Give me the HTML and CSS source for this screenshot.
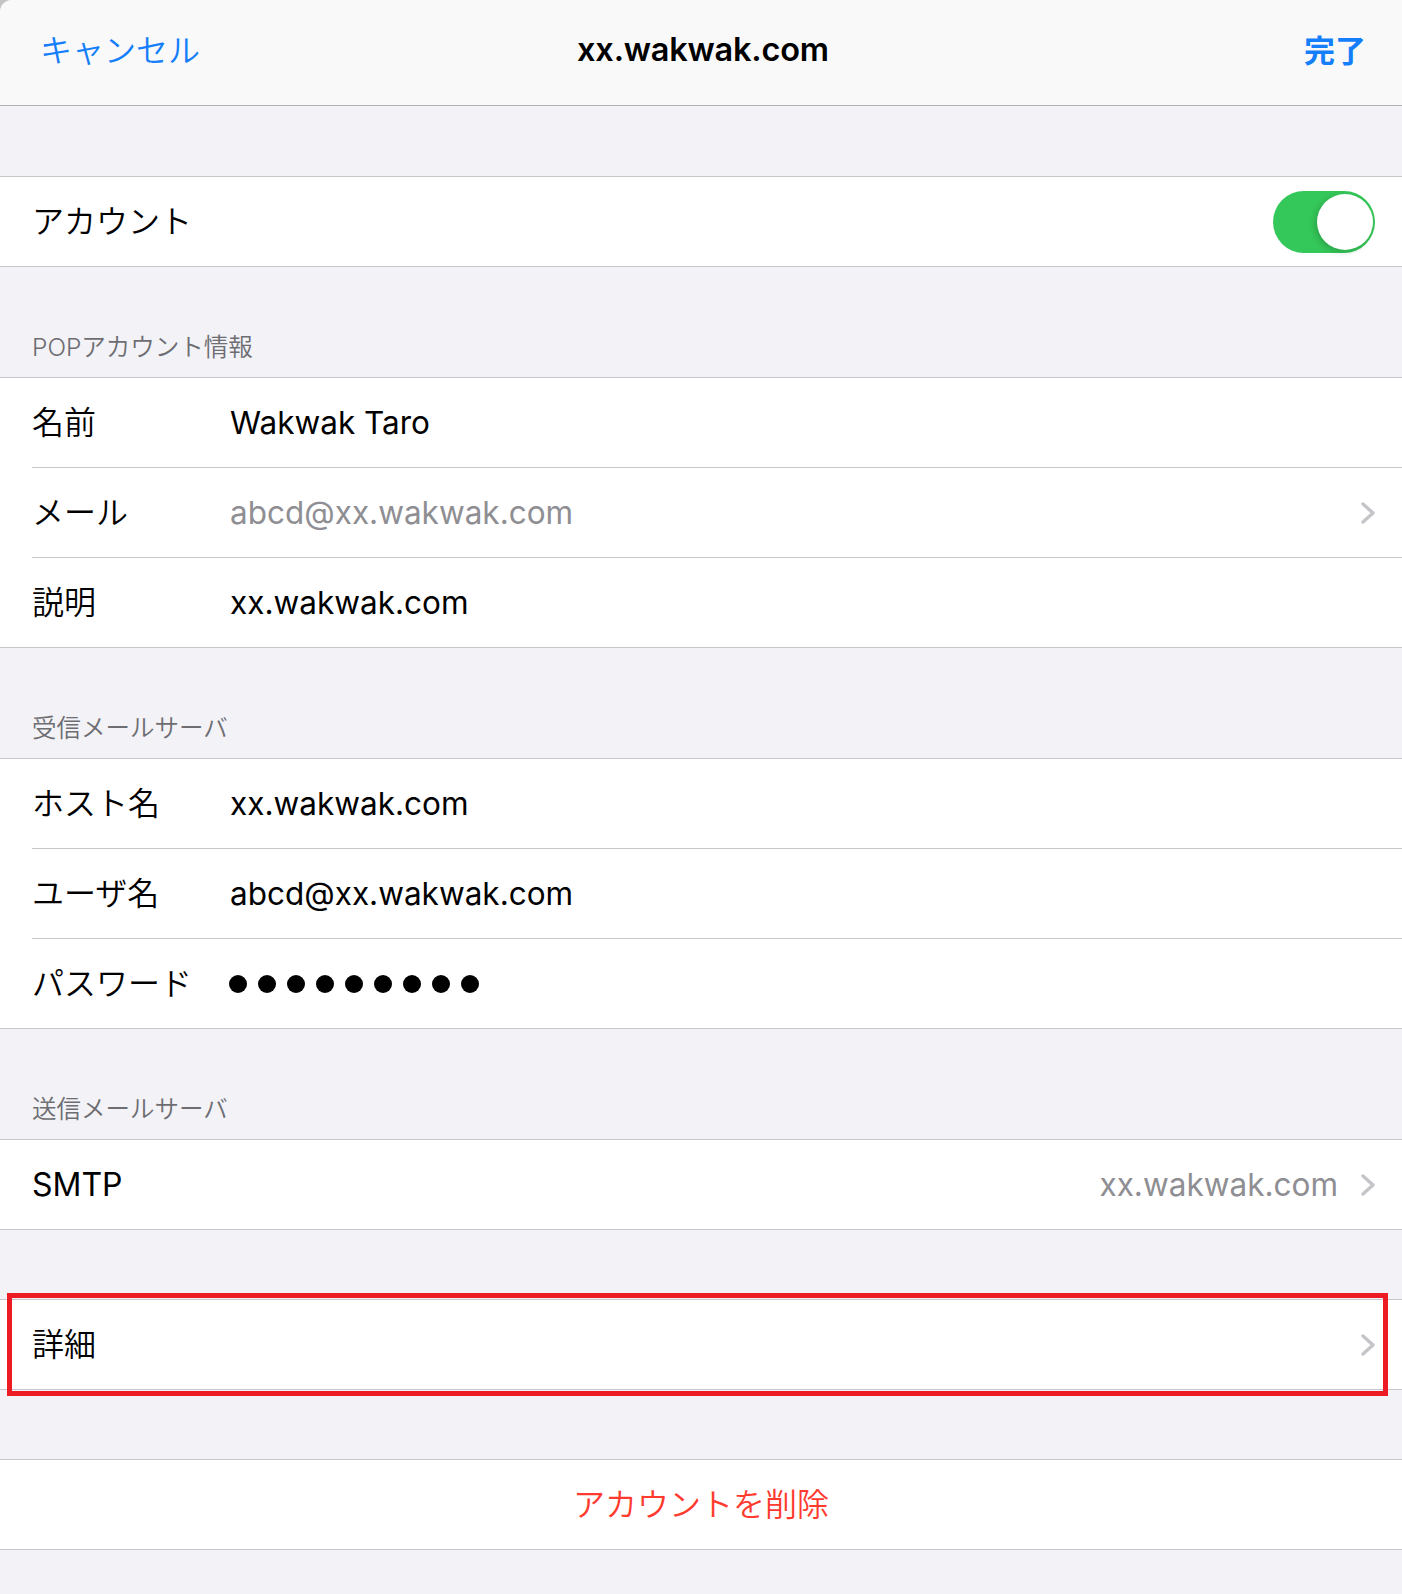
FILE: index.html
```html
<!DOCTYPE html>
<html lang="ja">
  <head>
    <meta charset="UTF-8" />
    <meta name="viewport" content="width=device-width, initial-scale=1.0" />
    <title>xx.wakwak.com - アカウント</title>
    <link rel="stylesheet" href="styles.css">
  </head>
  <body>
    <div class="sheet">
      <div class="navbar">
        <div class="nav-btn">キャンセル</div>
        <h1>xx.wakwak.com</h1>
        <div class="nav-btn done">完了</div>
      </div>

      <div class="gap"></div>

      <div class="group">
        <div class="cell">
          <div class="cell-inner">
            <span class="label wide">アカウント</span>
            <span class="switch on"><span class="knob"></span></span>
          </div>
        </div>
      </div>

      <div class="section-header">POPアカウント情報</div>
      <div class="group">
        <div class="cell">
          <div class="cell-inner">
            <span class="label">名前</span>
            <span class="value">Wakwak Taro</span>
          </div>
        </div>
        <div class="cell">
          <div class="cell-inner">
            <span class="label">メール</span>
            <span class="value muted">abcd@xx.wakwak.com</span>
            <svg class="chevron push" viewBox="0 0 14 22" width="14" height="22">
              <polyline points="2,2 12,11 2,20" />
            </svg>
          </div>
        </div>
        <div class="cell">
          <div class="cell-inner">
            <span class="label">説明</span>
            <span class="value">xx.wakwak.com</span>
          </div>
        </div>
      </div>

      <div class="section-header">受信メールサーバ</div>
      <div class="group">
        <div class="cell">
          <div class="cell-inner">
            <span class="label">ホスト名</span>
            <span class="value">xx.wakwak.com</span>
          </div>
        </div>
        <div class="cell">
          <div class="cell-inner">
            <span class="label">ユーザ名</span>
            <span class="value">abcd@xx.wakwak.com</span>
          </div>
        </div>
        <div class="cell">
          <div class="cell-inner">
            <span class="label">パスワード</span>
            <span class="dots">
              <i></i><i></i><i></i><i></i><i></i><i></i><i></i><i></i><i></i>
            </span>
          </div>
        </div>
      </div>

      <div class="section-header">送信メールサーバ</div>
      <div class="group">
        <div class="cell">
          <div class="cell-inner">
            <span class="label wide latin">SMTP</span>
            <span class="value muted push">xx.wakwak.com</span>
            <svg class="chevron near" viewBox="0 0 14 22" width="14" height="22">
              <polyline points="2,2 12,11 2,20" />
            </svg>
          </div>
        </div>
      </div>

      <div class="gap short"></div>

      <div class="group marked">
        <div class="cell">
          <div class="cell-inner">
            <span class="label wide">詳細</span>
            <svg class="chevron push" viewBox="0 0 14 22" width="14" height="22">
              <polyline points="2,2 12,11 2,20" />
            </svg>
          </div>
        </div>
        <div class="highlight"></div>
      </div>

      <div class="gap short"></div>

      <div class="group">
        <div class="cell danger">アカウントを削除</div>
      </div>
    </div>
  </body>
</html>
```

FILE: styles.css
```css
* {
  margin: 0;
  padding: 0;
  box-sizing: border-box;
}

body {
  background: #c4c4c4;
  font-family: "Inter", "Noto Sans CJK JP", sans-serif;
  font-size: 32px;
  color: #000;
}

.sheet {
  min-height: 100vh;
  background: #f2f2f7;
  border-top-left-radius: 12px;
  overflow: hidden;
}

.navbar {
  height: 106px;
  background: #f9f9f9;
  border-bottom: 1px solid #b2b2b2;
  display: flex;
  align-items: center;
  justify-content: space-between;
  padding: 0 36px 6px 40px;
}

.navbar h1 {
  font-size: 32.5px;
  font-weight: 600;
  letter-spacing: -0.2px;
}

.nav-btn {
  color: #147efb;
  font-size: 32px;
  font-weight: 350;
  width: 200px;
  padding-bottom: 4px;
}

.nav-btn.done {
  font-weight: 700;
  text-align: right;
  font-size: 31px;
  padding-bottom: 2px;
}

.gap {
  height: 70px;
}

.gap.short {
  height: 69px;
}

.section-header {
  height: 110px;
  display: flex;
  align-items: flex-end;
  padding: 0 0 15px 32px;
  font-size: 24.5px;
  font-weight: 350;
  color: #6d6d72;
  line-height: 30px;
}

.group {
  background: #fff;
  border-top: 1px solid #c8c7cc;
  border-bottom: 1px solid #c8c7cc;
}

.cell {
  padding-left: 32px;
}

.cell-inner {
  height: 89px;
  display: flex;
  align-items: center;
  padding-right: 27px;
}

.cell + .cell .cell-inner {
  border-top: 1px solid #c8c7cc;
  height: 90px;
}

.label {
  flex: 0 0 198px;
  white-space: nowrap;
  font-weight: 350;
  padding-bottom: 5px;
}

.label.wide {
  flex: 0 0 auto;
}

.label.latin {
  font-weight: 400;
  padding-bottom: 0;
}

.value {
  font-size: 31.5px;
  white-space: nowrap;
}

.muted {
  color: #8e8e93;
}

.push {
  margin-left: auto;
}

.chevron {
  flex: 0 0 auto;
}

.chevron polyline {
  fill: none;
  stroke: #c4c4c9;
  stroke-width: 3.4;
  stroke-linecap: round;
  stroke-linejoin: round;
}

.chevron.near {
  margin-left: 23px;
}

.switch {
  margin-left: auto;
  width: 102px;
  height: 62px;
  border-radius: 31px;
  background: #34c759;
  display: flex;
  align-items: center;
  justify-content: flex-end;
  padding: 0 2px;
}

.knob {
  width: 56px;
  height: 56px;
  border-radius: 50%;
  background: #fff;
  box-shadow: -2px 2px 6px rgba(0, 0, 0, 0.18);
}

.dots {
  display: flex;
  gap: 11px;
  margin-left: -1px;
}

.dots i {
  width: 18px;
  height: 18px;
  border-radius: 50%;
  background: #000;
}

.danger {
  height: 89px;
  padding: 0 0 5px;
  display: flex;
  align-items: center;
  justify-content: center;
  color: #ff3b30;
  font-weight: 350;
}

.marked {
  position: relative;
}

.highlight {
  position: absolute;
  top: -7px;
  bottom: -7px;
  left: 7px;
  right: 14px;
  border: 5px solid #ed1c24;
}
```
